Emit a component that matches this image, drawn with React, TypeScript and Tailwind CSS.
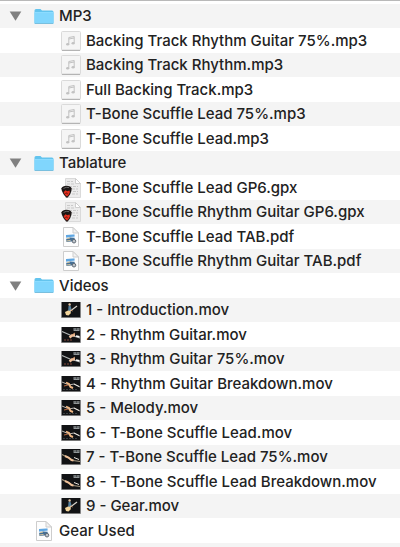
import { useState } from 'react'
import clsx from 'clsx'

type Kind = 'folder' | 'audio' | 'gpx' | 'pdf' | 'video'

interface Entry {
    name: string
    kind: Kind
    parent?: string
    pose?: 'stand' | 'neck' | 'hands' | 'low'
}

const entries: Entry[] = [
    { name: 'MP3', kind: 'folder' },
    { name: 'Backing Track Rhythm Guitar 75%.mp3', kind: 'audio', parent: 'MP3' },
    { name: 'Backing Track Rhythm.mp3', kind: 'audio', parent: 'MP3' },
    { name: 'Full Backing Track.mp3', kind: 'audio', parent: 'MP3' },
    { name: 'T-Bone Scuffle Lead 75%.mp3', kind: 'audio', parent: 'MP3' },
    { name: 'T-Bone Scuffle Lead.mp3', kind: 'audio', parent: 'MP3' },
    { name: 'Tablature', kind: 'folder' },
    { name: 'T-Bone Scuffle Lead GP6.gpx', kind: 'gpx', parent: 'Tablature' },
    { name: 'T-Bone Scuffle Rhythm Guitar GP6.gpx', kind: 'gpx', parent: 'Tablature' },
    { name: 'T-Bone Scuffle Lead TAB.pdf', kind: 'pdf', parent: 'Tablature' },
    { name: 'T-Bone Scuffle Rhythm Guitar TAB.pdf', kind: 'pdf', parent: 'Tablature' },
    { name: 'Videos', kind: 'folder' },
    { name: '1 - Introduction.mov', kind: 'video', parent: 'Videos', pose: 'stand' },
    { name: '2 - Rhythm Guitar.mov', kind: 'video', parent: 'Videos', pose: 'neck' },
    { name: '3 - Rhythm Guitar 75%.mov', kind: 'video', parent: 'Videos', pose: 'neck' },
    { name: '4 - Rhythm Guitar Breakdown.mov', kind: 'video', parent: 'Videos', pose: 'hands' },
    { name: '5 - Melody.mov', kind: 'video', parent: 'Videos', pose: 'hands' },
    { name: '6 - T-Bone Scuffle Lead.mov', kind: 'video', parent: 'Videos', pose: 'hands' },
    { name: '7 - T-Bone Scuffle Lead 75%.mov', kind: 'video', parent: 'Videos', pose: 'low' },
    { name: '8 - T-Bone Scuffle Lead Breakdown.mov', kind: 'video', parent: 'Videos', pose: 'low' },
    { name: '9 - Gear.mov', kind: 'video', parent: 'Videos', pose: 'stand' },
    { name: 'Gear Used', kind: 'pdf' },
]

function FolderIcon() {
    return (
        <svg width="20" height="17" viewBox="0 0 20 17" aria-hidden="true">
            <path d="M.5 2.5Q.5 1 2 1h4.5L8 2.5h10q1.5 0 1.5 1.5v11q0 1-1 1h-17q-1 0-1-1z" fill="#63c4ee" />
            <path d="M.5 5h19v10q0 1-1 1h-17q-1 0-1-1z" fill="#80d6fd" />
            <path d="M.5 4.5h19" stroke="#8cdcff" />
            <path d="M1 15.5h18" stroke="#79bfde" />
        </svg>
    )
}

function AudioIcon() {
    return (
        <svg width="20" height="20" viewBox="0 0 20 20" aria-hidden="true">
            <rect x=".5" y=".5" width="19" height="19" rx="1" fill="#f5f5f5" stroke="#dadada" />
            <path d="M1 19.3h18" stroke="#aaa" />
            <path d="M7.8 13.2V6.5l5.4-1v6.7M7.8 8l5.4-1" fill="none" stroke="#c2c2c2" />
            <ellipse cx="6.7" cy="13.3" rx="1.6" ry="1.2" fill="#c2c2c2" />
            <ellipse cx="12.1" cy="12.3" rx="1.6" ry="1.2" fill="#c2c2c2" />
        </svg>
    )
}

function GpxIcon() {
    return (
        <svg width="20" height="20" viewBox="0 0 20 20" aria-hidden="true">
            <path d="M4.5.5h10l5 5v14h-15z" fill="#ececec" stroke="#dadada" />
            <path d="M14.5.5v5h5z" fill="#fff" stroke="#cfcfcf" />
            <path d="M6 3.5h6M6 6h7M8 8.5h9M11 11h6M12 13.5h5M11 16h6" stroke="#c9c9c9" strokeDasharray="3 1" />
            <path d="M.3 10.5Q1.5 7.8 5.5 7.8t5.2 2.7Q10.5 16 6 20 1.2 16 .3 10.5z" fill="#1c1716" />
            <path d="M2.5 10.5Q5 8.6 8 9.6" stroke="#666" fill="none" />
            <path d="M2.6 14.2L4.5 12.3l1.7 1 2.4-.8.3 2-1.5 2.7L6 18.5 4.2 17z" fill="#e5301f" />
            <path d="M4.5 15.7l1-1 1 1.5" stroke="#641410" fill="none" />
        </svg>
    )
}

function PdfIcon() {
    return (
        <svg width="16" height="20" viewBox="0 0 16 20" aria-hidden="true">
            <path d="M.5.5H10L15.5 6v13.5H.5z" fill="#fdfdfd" stroke="#cdcdcd" strokeLinejoin="round" />
            <path d="M10 .5V6h5.5z" fill="#f2f2f2" stroke="#cdcdcd" strokeLinejoin="round" />
            <path d="M3 8l8.5-.5.5 6L3.500 15z" fill="#d3e5f4" />
            <path d="M3 8l8.5-.5v2L3 10.5z" fill="#5ea6e2" />
            <path d="M3.2 12L7 10.5l4.5.5.5 3-8.5 1z" fill="#466f94" />
            <path d="M3.5 14l4-.5M4 11.5l3-.5" stroke="#dccaa0" />
            <circle cx="11" cy="14.2" r="1.8" fill="#c0c6cb" stroke="#626c76" />
        </svg>
    )
}

function VideoIcon({ pose }: { pose: Entry['pose'] }) {
    return (
        <svg width="20" height="16" viewBox="0 0 20 16" aria-hidden="true">
            <path d="M.5 0h19v15.5H.5z" fill="#121315" />
            <path d="M.5 15.5h19" stroke="#777" />
            {pose === 'stand' ? (
                <>
                    <path d="M7.5 4l2-.5.8 3-.8 3-2.5 1z" fill="#55809e" />
                    <circle cx="8.6" cy="2.5" r="1.2" fill="#e3c4a2" />
                    <path d="M8 10l8-6" stroke="#d9d5cc" strokeWidth="1.2" />
                    <path d="M4 10l3-1.5L9 9l1 2-2.500 2.500L5 13z" fill="#f3d59b" />
                    <path d="M9.5 8l2 1" stroke="#e0a574" />
                </>
            ) : (
                <>
                    <path d="M12 1h7v3h-7z" fill="#4a4e50" />
                    <path d="M13 2h2M16 2h2M13 3.5h5" stroke="#92989a" />
                </>
            )}
            {pose === 'neck' && (
                <>
                    <path d="M1 4.5L9 8l10 3" stroke="#b5b8b8" strokeWidth="1.2" fill="none" />
                    <path d="M8.5 10.5l2.500-2 3-.5" stroke="#f0c09a" strokeWidth="2.4" fill="none" />
                    <path d="M11 8l3-2" stroke="#d99d72" />
                    <path d="M15 9l3.5.8" stroke="#fff" strokeWidth="1.5" />
                    <path d="M3 13h9" stroke="#83493a" strokeDasharray="2 1" />
                </>
            )}
            {pose === 'hands' && (
                <>
                    <path d="M1 6l7 3 5-1 6 3" stroke="#b8b4af" fill="none" />
                    <path d="M5 6.5L8 8l1.5 3 2.5 1" stroke="#f0b885" strokeWidth="1.9" fill="none" />
                    <path d="M3 10l4-1" stroke="#b8683e" />
                    <path d="M13 8l5 2.5" stroke="#ebe7e1" />
                    <path d="M2 13.5h15" stroke="#3b4043" strokeDasharray="2 1" />
                </>
            )}
            {pose === 'low' && (
                <>
                    <path d="M1 5.5l6 3 5 3 7 1" stroke="#a99b82" strokeWidth="1.2" fill="none" />
                    <path d="M4 7l3.5 1.500 3 2.500 2 .5" stroke="#f0c199" strokeWidth="2" fill="none" />
                    <path d="M13 8.5l5 2" stroke="#e8e3dc" />
                </>
            )}
        </svg>
    )
}

function EntryIcon({ entry }: { entry: Entry }) {
    switch (entry.kind) {
        case 'folder':
            return <FolderIcon />
        case 'audio':
            return <AudioIcon />
        case 'gpx':
            return <GpxIcon />
        case 'pdf':
            return <PdfIcon />
        default:
            return <VideoIcon pose={entry.pose} />
    }
}

export default function App() {
    const [closed, setClosed] = useState<string[]>([])

    function toggle(name: string) {
        setClosed(closed.includes(name) ? closed.filter((n) => n !== name) : [...closed, name])
    }

    const visible = entries.filter((e) => !e.parent || !closed.includes(e.parent))

    return (
        <main className="min-h-screen flex flex-col bg-white border-t border-[#b9b9b9] font-['Inter','Liberation_Sans',sans-serif] text-[15px] leading-6 font-medium text-[#222]">
            <ul className="pt-[3px]">
                {visible.map((entry) => (
                    <li
                        key={entry.name}
                        className="flex items-center h-6 even:h-[25px] odd:bg-[#f4f4f4] whitespace-nowrap"
                    >
                        <div className={clsx('flex shrink-0 items-center pl-[9px]', entry.parent ? 'w-15' : 'w-[33px]')}>
                            {entry.kind === 'folder' && (
                                <button
                                    aria-label={`Toggle ${entry.name}`}
                                    aria-expanded={!closed.includes(entry.name)}
                                    onClick={() => toggle(entry.name)}
                                    className={clsx(closed.includes(entry.name) && '-rotate-90')}
                                >
                                    <svg width="13" height="10" viewBox="0 0 13 10">
                                        <path d="M.7.5h11.6L6.5 9.8z" fill="#808080" />
                                    </svg>
                                </button>
                            )}
                        </div>
                        <div className="flex w-[22px] shrink-0 justify-center">
                            <EntryIcon entry={entry} />
                        </div>
                        <span className="pl-1">{entry.name}</span>
                    </li>
                ))}
            </ul>
            <div className="grow bg-[#f4f4f4]" />
        </main>
    )
}
